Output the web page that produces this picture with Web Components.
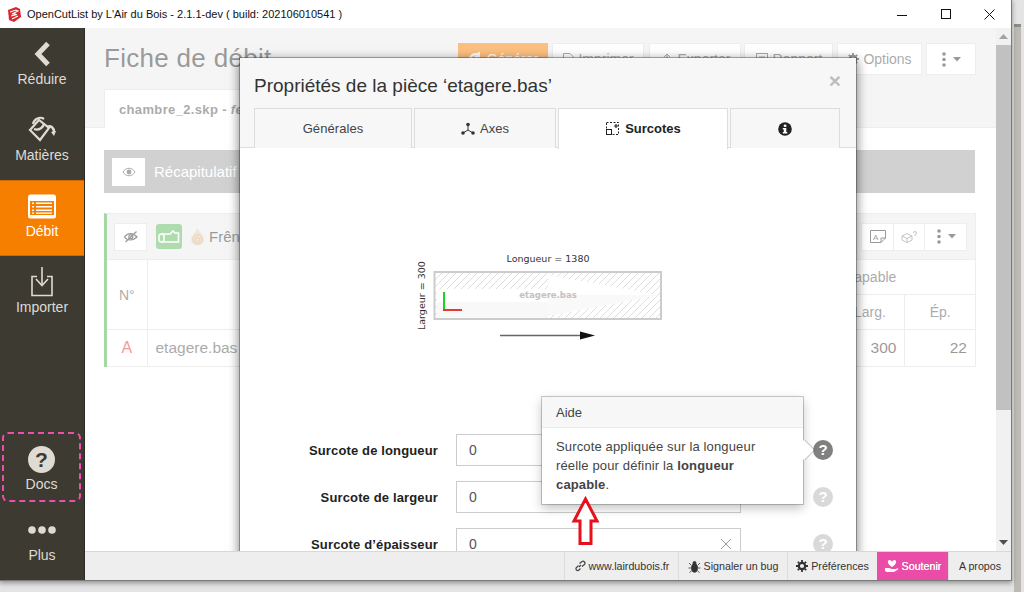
<!DOCTYPE html>
<html lang="fr"><head><meta charset="utf-8"><title>OpenCutList</title>
<style>
html,body{margin:0;padding:0;width:1024px;height:592px;overflow:hidden;font-family:"Liberation Sans",Arial,sans-serif}
body{background:linear-gradient(#8e8c88,#8e8c88) 1014px 24px/7px 3px no-repeat,linear-gradient(#bdbab3,#bdbab3) 1014px 24px/7px 568px no-repeat,#e4e4e4}
svg{display:block}
</style></head><body>
<ocl-window>
  <ocl-titlebar slot="title">OpenCutList by L'Air du Bois - 2.1.1-dev ( build: 202106010541 )</ocl-titlebar>
  <ocl-sidebar slot="side">
    <ocl-nav-item>
      <svg slot="icon" width="30" height="28" viewBox="0 0 30 28"><path d="M21 3.500 L11 14 L21 24.500" fill="none" stroke="#dfdad2" stroke-width="5"/></svg>Réduire</ocl-nav-item>
    <ocl-nav-item>
      <svg slot="icon" width="30" height="28" viewBox="0 0 30 28" fill="none" stroke="#dfdad2" stroke-width="2.200"><path d="M3 14 L13 24 L22 12 L12 4 Z"/><path d="M6 8 C7 3 13 0 17 3"/><path d="M7 13 C12 15 17 11 17 7"/><path d="M20 11 C24 9 27 12 27 16" stroke-width="2.600"/><path d="M24 16 L27 20 L29 15" stroke="none" fill="#dfdad2"/></svg>Matières</ocl-nav-item>
    <ocl-nav-item active>
      <svg slot="icon" width="30" height="25" viewBox="0 0 30 25"><rect x="1" y="0.500" width="28" height="24" rx="2.500" fill="#fff"/><rect x="3" y="7" width="24" height="14" fill="#f77f00"/><g fill="#fff"><rect x="9" y="8.500" width="16" height="1.500"/><rect x="9" y="12" width="16" height="1.500"/><rect x="9" y="15.500" width="16" height="1.500"/><rect x="9" y="18.500" width="16" height="1.300"/><rect x="5" y="8.500" width="2" height="1.500"/><rect x="5" y="12" width="2" height="1.500"/><rect x="5" y="15.500" width="2" height="1.500"/><rect x="5" y="18.500" width="2" height="1.300"/></g></svg>Débit</ocl-nav-item>
    <ocl-nav-item>
      <svg slot="icon" width="30" height="30" viewBox="0 0 30 30" fill="none" stroke="#dfdad2" stroke-width="1.600"><path d="M10 9.500 H5 V28.500 H25 V9.500 H20"/><path d="M15 0 V17"/><path d="M9 12 L15 18.500 L21 12"/></svg>Importer</ocl-nav-item>
    <ocl-spacer></ocl-spacer>
    <ocl-nav-item docs>
      <ocl-help slot="icon"></ocl-help>Docs</ocl-nav-item>
    <ocl-nav-item>
      <svg slot="icon" width="30" height="10" viewBox="0 0 30 10" fill="#dfdad2"><circle cx="5" cy="5" r="3.800"/><circle cx="15" cy="5" r="3.800"/><circle cx="25" cy="5" r="3.800"/></svg>Plus</ocl-nav-item>
  </ocl-sidebar>
  <ocl-workspace slot="main">
    <ocl-page>
      <ocl-page-head>
        <span slot="title">Fiche de débit</span>
        <ocl-btn primary style="width:90px"><svg width="15" height="15" viewBox="0 0 15 15" fill="none" stroke="#fff" stroke-width="2.400"><path d="M13 7.500 A5.500 5.500 0 1 1 10.500 3"/><path d="M11 0 V4.500 H6.500" stroke-width="1.800"/></svg>Générer</ocl-btn>
        <ocl-btn style="width:92px;margin-left:4px"><svg width="12" height="13" viewBox="0 0 12 13" fill="none" stroke="#555"><path d="M1.500 .5 H8 L11 3.500 V12.500 H1.500 Z"/></svg>Imprimer</ocl-btn>
        <ocl-btn style="width:92px;margin-left:5px"><svg width="14" height="13" viewBox="0 0 14 13" fill="none" stroke="#555"><path d="M7 8 V1 M4 4 L7 1 L10 4 M2 7 V12 H12 V7"/></svg>Exporter</ocl-btn>
        <ocl-btn style="width:89px;margin-left:3px"><svg width="14" height="13" viewBox="0 0 14 13" fill="none" stroke="#555"><rect x="1.500" y=".5" width="11" height="12"/><path d="M4 4 H10 M4 7 H10 M4 10 H10"/></svg>Rapport</ocl-btn>
        <ocl-btn style="width:85px;margin-left:4px"><ocl-gear></ocl-gear>Options</ocl-btn>
        <ocl-btn style="width:50px;margin-left:4px"><ocl-kebab></ocl-kebab></ocl-btn>
        <span slot="tab"><b>chambre_2.skp - <i>fe</i></b></span>
      </ocl-page-head>
      <ocl-recap>
        <svg slot="icon" width="14" height="10" viewBox="0 0 14 10"><path d="M1 5 C4 0 10 0 13 5 C10 10 4 10 1 5Z" fill="none" stroke="#555" stroke-width="1"/><circle cx="7" cy="5" r="2.400" fill="#555"/></svg>
        Récapitulatif</ocl-recap>
      <ocl-group></ocl-group>
    </ocl-page>
    <ocl-scrollbar></ocl-scrollbar>
    <ocl-backdrop></ocl-backdrop>
    <ocl-modal>
      <span slot="title">Propriétés de la pièce ‘etagere.bas’</span>
      <ocl-tab slot="tabs" style="width:158px">Générales</ocl-tab>
      <ocl-tab slot="tabs" style="width:142px"><svg width="14" height="13" viewBox="0 0 14 13" fill="#333"><path d="M7 3 V8 L2 11 M7 8 L12 11" fill="none" stroke="#333" stroke-width="1"/><circle cx="7" cy="2.500" r="1.800"/><circle cx="2" cy="11" r="1.800"/><circle cx="12" cy="11" r="1.800"/></svg>Axes</ocl-tab>
      <ocl-tab slot="tabs" active style="width:170px"><svg width="15" height="15" viewBox="0 0 15 15" fill="none" stroke="#222"><rect x="1.500" y="1.500" width="12" height="12" stroke-dasharray="2 1.500"/><rect x="1.500" y="8.500" width="5" height="5" fill="#fff"/><path d="M9 5 H13 M11 3 V7" stroke-width="1.200"/></svg>Surcotes</ocl-tab>
      <ocl-tab slot="tabs" style="width:110px"><svg width="14" height="14" viewBox="0 0 14 14"><circle cx="7" cy="7" r="6.800" fill="#222"/><rect x="5.800" y="2.600" width="2.600" height="2.300" fill="#fff"/><path d="M4.800 6 H8.300 V10 H9.300 V11.600 H4.800 V10 H5.800 V7.500 H4.800Z" fill="#fff"/></svg></ocl-tab>
      <ocl-diagram></ocl-diagram>
      <ocl-field active>Surcote de longueur</ocl-field>
      <ocl-field>Surcote de largeur</ocl-field>
      <ocl-field clear>Surcote d’épaisseur</ocl-field>
      <ocl-popover slot="over"><span slot="title">Aide</span>Surcote appliquée sur la longueur réelle pour définir la <b>longueur capable</b>.</ocl-popover>
      <ocl-red-arrow slot="over"></ocl-red-arrow>
    </ocl-modal>
  </ocl-workspace>
  <ocl-statusbar slot="status">
    <ocl-status-item style="width:114px"><svg width="12" height="12" viewBox="0 0 12 12" fill="none" stroke="#444" stroke-width="1.200"><path d="M5 7 L7 5"/><path d="M4.500 5.500 L2 8 A2 2 0 0 0 4.500 10.500 L6.500 8.500"/><path d="M5.500 3.500 L8 1.500 A2 2 0 0 1 10.500 4.500 L8 6.500"/></svg>www.lairdubois.fr</ocl-status-item>
    <ocl-status-item style="width:109px"><svg width="13" height="13" viewBox="0 0 13 13" fill="#333" stroke="#333" stroke-width=".8"><ellipse cx="6.500" cy="8" rx="3" ry="4.200"/><circle cx="6.500" cy="3" r="1.600"/><path d="M3 5 L1 3 M10 5 L12 3 M3 8 H.5 M10 8 H12.500 M3.500 11 L1.500 12.500 M9.500 11 L11.500 12.500" fill="none"/></svg>Signaler un bug</ocl-status-item>
    <ocl-status-item style="width:90px"><ocl-gear></ocl-gear>Préférences</ocl-status-item>
    <ocl-status-item pink style="width:71px"><svg width="15" height="14" viewBox="0 0 15 14" fill="#fff"><path d="M8 8 C3 5 3 1 5.500 1 C6.800 1 7.500 2 8 2.800 C8.500 2 9.200 1 10.500 1 C13 1 13 5 8 8Z"/><path d="M1 9 H5 L8 10 H12 L14 9 V10.500 L10 13 H3 L1 12Z"/></svg>Soutenir</ocl-status-item>
    <ocl-status-item style="width:63px">A propos</ocl-status-item>
  </ocl-statusbar>
</ocl-window>
<script>
const def=(name,html,init)=>customElements.define(name,class extends HTMLElement{constructor(){super();this.attachShadow({mode:'open'}).innerHTML=html;if(init)init(this)}});
const FONT='font-family:"Liberation Sans",Arial,sans-serif;';

def('ocl-window',`<style>
:host{display:grid;grid-template-columns:85px 926px;grid-template-rows:28px 552px;width:1011px;height:580px;box-shadow:0 0 0 1px #7a7a7a,0 2px 5px 1px rgba(0,0,0,.38);background:#fff;${FONT}}
.t{grid-column:1/3}.m{display:grid;grid-template-rows:523px 29px;min-width:0;min-height:0}
</style><div class="t"><slot name="title"></slot></div><slot name="side"></slot><div class="m"><slot name="main"></slot><slot name="status"></slot></div>`);

def('ocl-titlebar',`<style>
:host{display:flex;align-items:center;height:28px;background:#fff;color:#111;font:11px "Liberation Sans",sans-serif;padding-left:7px;box-sizing:border-box}
.txt{margin-left:6px;white-space:nowrap}
.ctl{margin-left:auto;display:flex;height:28px}
.ctl div{width:44px;display:flex;align-items:center;justify-content:center}
</style>
<svg width="14" height="15" viewBox="0 0 14 15" style="display:block"><path d="M1 3 L9 0 L13 2 L14 10 L7 15 L2 13Z" fill="#d9252b"/><path d="M3 5 L9 3 L11 4 L5 7 L9 7 M4 9 L10 7.500 M5 12 L11 9" stroke="#fff" stroke-width="1.100" fill="none"/></svg>
<span class="txt"><slot></slot></span>
<div class="ctl">
<div><svg width="11" height="11" viewBox="0 0 11 11"><path d="M0 6.500 H10" stroke="#111"/></svg></div>
<div><svg width="11" height="11" viewBox="0 0 11 11"><rect x=".5" y=".5" width="9" height="9" fill="none" stroke="#111"/></svg></div>
<div style="width:43px;margin-right:0"><svg width="11" height="11" viewBox="0 0 11 11"><path d="M.5 .5 L10.500 10.500 M10.500 .5 L.5 10.500" stroke="#111" stroke-width="1"/></svg></div>
</div>`);

def('ocl-sidebar',`<style>
:host{display:flex;flex-direction:column;background:#3d3a32;border-right:1px solid #2c2a25;width:84px;height:552px;box-sizing:content-box}
</style><slot></slot>`);
def('ocl-spacer',`<style>:host{display:block;flex:1}</style>`);

def('ocl-nav-item',`<style>
:host{display:flex;flex-direction:column;align-items:center;height:76px;flex:none;box-sizing:border-box;padding-top:10px;color:#dfdad2;font-size:14px;line-height:16px;gap:1px}
:host([active]){background:#f77f00;color:#fff;border-top:1px solid #d06a00;border-bottom:1px solid #d06a00;padding-top:9px}
:host([docs]){height:70px;width:79px;margin:0 0 2px 2px;border:2px dashed #ee4fae;border-radius:6px;padding-top:9px}
.i{display:flex;align-items:center;justify-content:center;height:32px}
</style><div class="i"><slot name="icon"></slot></div><div><slot></slot></div>`);

def('ocl-help',`<style>
:host{display:flex;align-items:center;justify-content:center;width:27px;height:27px;border-radius:50%;background:#dfdad2;color:#3d3a32;font:bold 21px/27px "Liberation Sans",sans-serif;flex:none}
</style>?`);

def('ocl-workspace',`<style>
:host{display:grid;grid-template-columns:911px 15px;position:relative;overflow:hidden;height:523px}
</style><slot></slot>`);

def('ocl-page',`<style>:host{display:flex;flex-direction:column;background:#fff;height:523px;min-width:0;color:#333}</style><slot></slot>`);

def('ocl-page-head',`<style>
:host{display:block;background:#ebebeb;border-bottom:1px solid #ddd;height:100px;box-sizing:border-box;padding:15px 20px 0 19px}
.r{display:flex;align-items:center;height:32px}
h1{flex:1;margin:0;font-weight:400;font-size:26px;line-height:32px;color:#333;white-space:nowrap;position:relative;top:-1px;letter-spacing:.3px}
.tab{margin-top:14px;height:39px;width:400px;background:#fff;box-sizing:border-box;border:1px solid #ddd;border-bottom:0;padding:0 14px;font-size:13px;line-height:40px;color:#555;letter-spacing:.35px}
</style><div class="r"><h1><slot name="title"></slot></h1><slot></slot></div><div class="tab"><slot name="tab"></slot></div>`);

def('ocl-btn',`<style>
:host{display:inline-flex;align-items:center;justify-content:center;gap:4px;height:32px;box-sizing:border-box;background:#fff;border:1px solid #ddd;color:#555;font-size:14px;flex:none;white-space:nowrap}
:host([primary]){background:#f77f00;border-color:#f77f00;color:#fff}
</style><slot></slot>`);

def('ocl-gear',`<style>:host{display:inline-block;line-height:0}</style><svg width="12" height="12" viewBox="0 0 12 12"><circle cx="6" cy="6" r="3.200" fill="none" stroke="#333" stroke-width="2.200"/><path d="M6 0 V12 M0 6 H12 M1.800 1.800 L10.200 10.200 M10.200 1.800 L1.800 10.200" stroke="#333" stroke-width="1.800" stroke-dasharray="2 8 2 0"/></svg>`);

def('ocl-kebab',`<style>:host{display:inline-flex;align-items:center;gap:6px;line-height:0}</style>
<svg width="6" height="15" viewBox="0 0 6 15" fill="#333"><circle cx="3" cy="2" r="1.800"/><circle cx="3" cy="7.500" r="1.800"/><circle cx="3" cy="13" r="1.800"/></svg>
<svg width="8" height="5" viewBox="0 0 8 5" fill="#333"><path d="M0 0 H8 L4 4.500Z"/></svg>`);

def('ocl-recap',`<style>
:host{display:flex;align-items:center;margin:22px 21px 0 19px;height:43px;background:#a2a2a2;color:#fff;font-size:15px;padding-left:8px;flex:none}
.b{width:33px;height:28px;background:#fff;display:flex;align-items:center;justify-content:center;margin-right:9px}
</style><div class="b"><slot name="icon"></slot></div><slot></slot>`);

const eyeOff=`<svg width="16" height="13" viewBox="0 0 16 13" fill="none" stroke="#333" stroke-width="1.200"><path d="M1.500 7 C4.500 2.500 10 2.500 14 7 C10 11 4.500 11 1.500 7Z"/><circle cx="7.800" cy="6.800" r="2"/><path d="M2.500 12 L13.500 1.500"/></svg>`;
def('ocl-group',`<style>
:host{display:block;margin:20px 20px 0 19px;border-left:3px solid #4cae4c;border-top:1px solid #ddd;border-right:1px solid #ddd;flex:none;font-size:14px;color:#333}
.h{display:flex;align-items:center;height:45px;background:#ebebeb;padding-left:7px}
.eb{width:33px;height:28px;box-sizing:border-box;background:#fff;border:1px solid #ddd;display:flex;align-items:center;justify-content:center}
.mat{width:26px;height:25px;border-radius:3px;background:#5cb85c;margin-left:9px;display:flex;align-items:center;justify-content:center}
.drop{margin-left:9px}.nm{margin-left:5px;font-size:15px}
.gb{margin-left:auto;margin-right:8px;display:flex}
.gb div{height:28px;box-sizing:border-box;background:#fff;border:1px solid #ddd;border-left-width:0;display:flex;align-items:center;justify-content:center;gap:6px}
table{border-collapse:collapse;width:100%;table-layout:fixed}
td{border:1px solid #ddd;padding:0 8px;box-sizing:border-box}
tr>td:first-child{border-left:0}tr>td:last-child{border-right:0}
.c{text-align:center}.n{font-size:15.5px;text-align:right}
.g{color:#555}
</style>
<div class="h"><div class="eb">${eyeOff}</div>
<div class="mat"><svg width="22" height="14" viewBox="0 0 22 14" fill="none" stroke="#fff" stroke-width="1.600"><rect x="1" y="4" width="5" height="8" rx="2.500"/><path d="M3.500 4 H12 L15 1 L17 3 H20.500 V12 H3.500"/></svg></div>
<svg class="drop" width="13" height="18" viewBox="0 0 14 19"><path d="M7 .5 C9 5 13.500 8 13.500 12 A6.500 6.500 0 0 1 .5 12 C.5 8 5 5 7 .5Z" fill="#e8c9a0" stroke="#ccb" stroke-width=".6"/><path d="M7 7 A5 5 0 0 1 7 17 A5 5 0 0 1 7 7Z M7 10 A2.500 2.500 0 0 1 7 15 A2.500 2.500 0 0 1 7 10" fill="none" stroke="#bb9970" stroke-width=".7"/></svg>
<span class="nm">Frêne</span>
<div class="gb"><div style="width:33px;border-left-width:1px"><svg width="16" height="13" viewBox="0 0 16 13" fill="none" stroke="#333"><path d="M.5 .5 H15.500 V8 L11 12.500 H.5Z"/><path d="M11 12.500 V8 H15.500"/><text x="3" y="9.500" font-size="8" font-family="Liberation Sans" fill="#333" stroke="none">A</text></svg></div>
<div style="width:31px"><svg width="16" height="13" viewBox="0 0 16 13" fill="none" stroke="#888"><path d="M1 6 L6 3.500 L11 6 V10 L6 12.500 L1 10Z M1 6 L6 8.500 L11 6 M6 8.500 V12.500"/><path d="M12.500 3 A1.500 1.500 0 1 1 14 4.500 V6" stroke="#888"/></svg></div>
<div style="width:42px"><svg width="6" height="15" viewBox="0 0 6 15" fill="#333"><circle cx="3" cy="2" r="1.800"/><circle cx="3" cy="7.500" r="1.800"/><circle cx="3" cy="13" r="1.800"/></svg><svg width="8" height="5" viewBox="0 0 8 5" fill="#333"><path d="M0 0 H8 L4 4.500Z"/></svg></div></div></div>
<table><colgroup><col style="width:40px"><col><col style="width:70px"><col style="width:70px"><col style="width:70px"></colgroup>
<tr style="height:35px"><td class="c g" rowspan="2">N°</td><td rowspan="2"></td><td class="c g" colspan="3">Capable</td></tr>
<tr style="height:35px"><td class="c g">Long.</td><td class="c g">Larg.</td><td class="c g">Ép.</td></tr>
<tr style="height:37px"><td class="c" style="font-size:16px;color:#e8302c">A</td><td style="font-size:15.500px;color:#555">etagere.bas</td><td class="n">1380</td><td class="n">300</td><td class="n">22</td></tr>
</table>`);

def('ocl-scrollbar',`<style>
:host{display:flex;flex-direction:column;align-items:center;background:#f1f1f1;height:523px;position:relative;z-index:3}
.a{height:17px;flex:none;display:flex;align-items:center;justify-content:center}
.th{width:15px;height:365px;background:#c1c1c1;flex:none}.f{flex:1}
</style><div class="a"><svg width="9" height="5" viewBox="0 0 9 5" fill="#a3a3a3"><path d="M0 5 L4.500 0 L9 5Z"/></svg></div><div class="th"></div><div class="f"></div><div class="a"><svg width="9" height="5" viewBox="0 0 9 5" fill="#505050"><path d="M0 0 H9 L4.500 5Z"/></svg></div>`);

def('ocl-backdrop',`<style>:host{display:block;position:absolute;inset:0;background:rgba(255,255,255,.5)}</style>`);

def('ocl-modal',`<style>
:host{display:block;position:absolute;left:155px;top:30px;width:616px;height:540px;background:#fff;box-shadow:0 0 0 1px rgba(0,0,0,.28),0 3px 10px 1px rgba(0,0,0,.5);color:#333;z-index:2}
.hd{background:#f7f7f7;height:90px;box-sizing:border-box;border-bottom:1px solid #ddd;position:relative}
h2{margin:0;padding:17px 14px 0;font-weight:400;font-size:19px;line-height:22px;color:#333}
.x{position:absolute;right:15px;top:12px;color:#bdbdbd;font:bold 21px/21px "Liberation Sans",sans-serif}
.tabs{position:absolute;left:14px;top:50px;display:flex;gap:2px}
</style><div class="hd"><h2><slot name="title"></slot></h2><span class="x">×</span><div class="tabs"><slot name="tabs"></slot></div></div><slot></slot><slot name="over"></slot>`);

def('ocl-tab',`<style>
:host{display:flex;align-items:center;justify-content:center;gap:5px;height:40px;box-sizing:border-box;border:1px solid #ddd;border-bottom:0;background:#f7f7f7;color:#444;font-size:13px;letter-spacing:.08px}
:host([active]){background:#fff;height:41px;padding-bottom:1px;font-weight:700;color:#222;position:relative;z-index:1;letter-spacing:0}
</style><slot></slot>`);

def('ocl-diagram',`<style>:host{display:block;margin:101px 0 85px 170px;width:270px;height:100px}</style>
<svg width="270" height="100" viewBox="0 0 270 100" font-family="DejaVu Sans">
<defs><pattern id="h" width="7" height="7" patternUnits="userSpaceOnUse"><path d="M0 7 L7 0" stroke="#dedede" stroke-width="1"/></pattern></defs>
<text x="138" y="12.500" font-size="9.500" text-anchor="middle" fill="#333">Longueur = 1380</text>
<text transform="translate(14.500 81) rotate(-90)" font-size="9.500" fill="#333">Largeur = 300</text>
<rect x="24.500" y="23" width="226.500" height="47" fill="url(#h)" stroke="#ccc" stroke-width="2"/>
<path d="M138 26 L248 46 L138 67Z" fill="#fff"/>
<path d="M138 46 L248 46 L138 67Z" fill="#f9f9f9"/>
<path d="M27 40 H138 V53 H27Z" fill="#fff"/>
<path d="M27 53 H138 V69 H27Z" fill="#f8f8f8"/>
<text x="138" y="49" font-size="8.500" font-weight="700" text-anchor="middle" fill="#c2c2c2">etagere.bas</text>
<path d="M34 43 V61" stroke="#22d022" stroke-width="2"/><path d="M33 61 H52" stroke="#e43a32" stroke-width="2"/>
<path d="M90 86.500 H172" stroke="#666" stroke-width="1.400"/><path d="M170 82.500 L185 86.500 L170 90.500Z" fill="#111"/>
</svg>`);

def('ocl-field',`<style>
:host{display:grid;grid-template-columns:198px 285px 20px;column-gap:18px;align-items:center;height:32px;margin-bottom:15px}
.l{font-weight:700;font-size:13px;text-align:right;color:#222;letter-spacing:.14px;white-space:nowrap}
.i{height:32px;box-sizing:border-box;border:1px solid #ccc;padding:0 12px;font-size:14px;line-height:30px;color:#555;display:flex;justify-content:space-between;align-items:center}
.c{width:10px;height:10px;margin-right:-3px;display:none}
:host([clear]) .c{display:block}
.h{width:20px;height:20px;border-radius:50%;background:#d9d9d9;color:#fff;font:bold 15px/20px "Liberation Sans",sans-serif;text-align:center;margin-left:54px}
:host([active]) .h{background:#808080}
</style><div class="l"><slot></slot></div><div class="i">0<svg class="c" viewBox="0 0 10 10"><path d="M0 0 L10 10 M10 0 L0 10" stroke="#999"/></svg></div><div class="h">?</div>`);

def('ocl-popover',`<style>
:host{display:block;position:absolute;left:302px;top:339px;width:261px;box-sizing:border-box;background:#fff;box-shadow:0 0 0 1px rgba(0,0,0,.2),0 4px 10px rgba(0,0,0,.25);color:#444;z-index:3;height:107px}
.t{height:31px;background:#f7f7f7;border-bottom:1px solid #ebebeb;box-sizing:border-box;padding:0 14px;font-size:13px;line-height:31px}
.b{padding:9px 14px;font-size:13px;line-height:19px;letter-spacing:.15px}
.ar{position:absolute;right:-8px;top:46px;width:14px;height:14px;transform:rotate(45deg);background:#fff;box-shadow:1px -1px 0 rgba(0,0,0,.2)}
</style><div class="ar"></div><div class="t"><slot name="title"></slot></div><div class="b"><slot></slot></div>`);

def('ocl-red-arrow',`<style>:host{display:block;position:absolute;left:331px;top:438px;z-index:4;line-height:0}</style>
<svg width="30" height="52" viewBox="0 0 30 52"><path d="M14.500 3 L26 25 H20 V47.500 H9 V25 H3Z" fill="#fff" stroke="#e8101c" stroke-width="3"/></svg>`);

def('ocl-statusbar',`<style>
:host{display:flex;justify-content:flex-end;background:#eee;border-top:1px solid #d8d8d8;height:29px;box-sizing:border-box;position:relative;z-index:5;font-size:10.7px;color:#333}
</style><slot></slot>`);
def('ocl-status-item',`<style>
:host{display:flex;align-items:center;justify-content:center;gap:3px;box-sizing:border-box;border-left:1px solid #ddd;white-space:nowrap;height:28px}
:host([pink]){background:#ea4ca8;color:#fff;border-left:0;text-shadow:0 0 .6px #fff}
</style><slot></slot>`);
</script>
</body></html>
